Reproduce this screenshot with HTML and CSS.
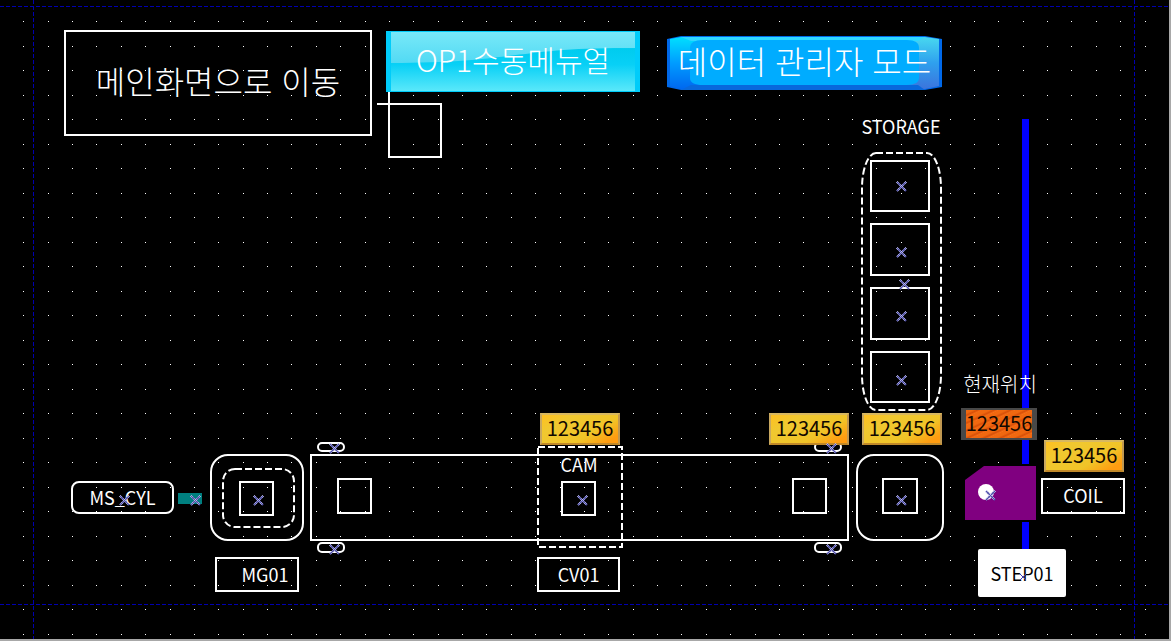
FILE: index.html
```html
<!DOCTYPE html>
<html lang="ko">
<head>
<meta charset="utf-8">
<title>OP1 수동메뉴얼</title>
<link rel="stylesheet" href="styles.css">
</head>
<body>
<main class="canvas">
  <svg class="drawing" aria-hidden="true">
    <defs>
      <pattern id="grid" x="23" y="21" width="195" height="49" patternUnits="userSpaceOnUse">
        <path class="dot" d="M0 0h1v1h-1zM25 0h1v1h-1zM49 0h1v1h-1zM73 0h1v1h-1zM98 0h1v1h-1zM122 0h1v1h-1zM147 0h1v1h-1zM171 0h1v1h-1zM0 25h1v1h-1zM25 25h1v1h-1zM49 25h1v1h-1zM73 25h1v1h-1zM98 25h1v1h-1zM122 25h1v1h-1zM147 25h1v1h-1zM171 25h1v1h-1z"/>
      </pattern>
      <g id="mark">
        <path class="mark-base" d="M-4 -4L5 5M5 -4L-4 5"/>
        <path class="mark-dots" d="M-4 -5L5 4M-5 -4L4 5M5 -5L-5 5M6 -4L-4 6"/>
      </g>
    </defs>
    <rect x="23" y="21" width="100%" height="100%" fill="url(#grid)"/>
    <g class="guide">
      <path d="M0 6.500H4000"/>
      <path d="M0 604.500H4000"/>
      <path d="M33.500 0V4000"/>
      <path d="M1134.500 0V4000"/>
    </g>
    <g class="rail">
      <rect x="1022" y="119" width="7" height="345"/>
      <rect x="1022" y="522" width="7" height="30"/>
    </g>
    <g class="line">
      <path d="M389 90V157H441V104H377"/>
      <rect x="871" y="161" width="58" height="50"/>
      <rect x="871" y="224" width="58" height="51"/>
      <rect x="871" y="288" width="58" height="51"/>
      <rect x="871" y="352" width="58" height="50"/>
      <rect x="311" y="455" width="537" height="85"/>
      <rect x="338" y="479" width="33" height="34"/>
      <rect x="793" y="479" width="33" height="34"/>
      <rect x="562" y="482" width="33" height="33"/>
      <rect x="240" y="482" width="33" height="33"/>
      <rect x="883" y="479" width="34" height="34"/>
    </g>
    <g class="line round">
      <rect x="211" y="455" width="92" height="85" rx="17"/>
      <rect x="857" y="455" width="86" height="85" rx="17"/>
      <rect x="318" y="443" width="26" height="8" rx="4"/>
      <rect x="318" y="543" width="26" height="9" rx="4"/>
      <rect x="815" y="443" width="26" height="8" rx="4"/>
      <rect x="815" y="543" width="26" height="9" rx="4"/>
    </g>
    <g class="line dashed">
      <rect x="862" y="153" width="79" height="257" rx="14" ry="35"/>
      <rect x="538" y="447" width="84" height="100"/>
      <rect x="223" y="469" width="71" height="58" rx="12"/>
    </g>
    <rect class="rod" x="178" y="493" width="24" height="11"/>
    <path class="head" d="M965 480L984 466H1036V520H965Z"/>
    <circle class="spot" cx="986" cy="492" r="8"/>
  </svg>

  <button class="node nav-main" type="button">메인화면으로 이동</button>
  <button class="node nav-manual" type="button">
    <svg class="gloss" viewBox="0 0 254 61" preserveAspectRatio="none" aria-hidden="true">
      <defs>
        <linearGradient id="aqua" x2="0" y2="1">
          <stop offset="0" stop-color="#35d8f4"/><stop offset=".3" stop-color="#00ccef"/>
          <stop offset=".55" stop-color="#08d0f6"/><stop offset="1" stop-color="#5ae8fa"/>
        </linearGradient>
        <linearGradient id="shine" x2="0" y2="1">
          <stop offset="0" stop-color="#78e8f8"/><stop offset="1" stop-color="#52daf4"/>
        </linearGradient>
      </defs>
      <rect width="254" height="61" fill="#00ccfa"/>
      <rect x="5" y="1" width="244" height="59" fill="url(#aqua)"/>
      <path d="M5 1H249V17C130 16 130 32 5 32Z" fill="url(#shine)"/>
    </svg>
    <span class="caption">OP1수동메뉴얼</span>
  </button>
  <button class="node nav-data" type="button">
    <svg class="gloss" viewBox="0 0 275 54" preserveAspectRatio="none" aria-hidden="true">
      <defs>
        <linearGradient id="edgeL" x2="0" y2="1">
          <stop offset="0" stop-color="#00e0ff"/><stop offset=".5" stop-color="#009cff"/><stop offset="1" stop-color="#0068f0"/>
        </linearGradient>
        <linearGradient id="edgeR" x2="0" y2="1">
          <stop offset="0" stop-color="#48d8f0"/><stop offset=".5" stop-color="#2fa0ee"/><stop offset="1" stop-color="#3c74dc"/>
        </linearGradient>
      </defs>
      <path d="M0 3L14 0H258L275 3V51L258 54H14L0 51Z" fill="#0068e8"/>
      <path d="M3 3L14 1H140V53H14L3 50Z" fill="url(#edgeL)"/>
      <path d="M135 1H258L272 3V50L258 53H135Z" fill="url(#edgeR)"/>
      <path d="M14 1H258L251 5H24Z" fill="#30d8ff"/>
      <path d="M24 49H251L258 54H14Z" fill="#0868dc"/>
      <path d="M36 4H240Q252 4 252 12V42Q252 49 240 49H36Q23 49 23 42V12Q23 4 36 4Z" fill="#00acff"/>
    </svg>
    <span class="caption">데이터 관리자 모드</span>
  </button>

  <div class="node text storage">STORAGE</div>
  <div class="node text cam">CAM</div>
  <div class="node text position" id="pos-label">현재위치</div>

  <output class="node value value-cam">123456</output>
  <output class="node value value-end">123456</output>
  <output class="node value value-storage">123456</output>
  <output class="node value value-coil">123456</output>
  <output class="node value value-position" aria-labelledby="pos-label">123456</output>

  <div class="node tag cylinder">MS_CYL</div>
  <div class="node tag magazine">MG01</div>
  <div class="node tag conveyor">CV01</div>
  <div class="node tag coil">COIL</div>
  <div class="node tag step">STEP01</div>

  <svg class="drawing marks" aria-hidden="true">
    <use href="#mark" x="901" y="186"/><use href="#mark" x="901" y="252"/>
    <use href="#mark" x="904" y="284"/><use href="#mark" x="901" y="316"/>
    <use href="#mark" x="901" y="380"/><use href="#mark" x="901" y="500"/>
    <use href="#mark" x="582" y="500"/><use href="#mark" x="258" y="500"/>
    <use href="#mark" x="124" y="500"/><use href="#mark" x="195" y="500"/>
    <use href="#mark" x="334" y="448"/><use href="#mark" x="334" y="549"/>
    <use href="#mark" x="831" y="448"/><use href="#mark" x="831" y="549"/>
    <use href="#mark" x="990" y="495"/>
    <path class="mark-thin" d="M1020 574L1026 580M1026 574L1020 580"/>
  </svg>
</main>
</body>
</html>
```

FILE: styles.css
```css
* {
  box-sizing: border-box;
}

body {
  margin: 0;
  background: #000;
}

.canvas {
  position: relative;
  min-height: 100vh;
  overflow: hidden;
  border-right: 2px solid #a8a8a8;
  border-bottom: 2px solid #a8a8a8;
  background: #000;
  color: #fff;
  font-family: "Noto Sans CJK KR", sans-serif;
  font-size: 18px;
  line-height: 24px;
}

.drawing {
  position: absolute;
  inset: 0;
  width: 100%;
  height: 100%;
}

.marks {
  pointer-events: none;
}

.dot {
  fill: #fff;
}

.guide {
  fill: none;
  stroke: #0000b0;
  stroke-width: 1;
  stroke-dasharray: 4 2;
}

.rail {
  fill: #00f;
}

.line {
  fill: none;
  stroke: #fff;
  stroke-width: 2;
}

.dashed {
  stroke-dasharray: 7 3;
}

.rod {
  fill: #008080;
}

.head {
  fill: #800080;
}

.spot {
  fill: #fff;
}

.mark-base {
  fill: none;
  stroke: #5050a8;
  stroke-width: 2;
}

.mark-dots {
  fill: none;
  stroke: #d0d0f8;
  stroke-width: 1;
  stroke-dasharray: 1 1;
}

.mark-thin {
  stroke: #4040b0;
  stroke-width: 1;
}

.node {
  position: absolute;
  display: flex;
  align-items: center;
  justify-content: center;
  margin: 0;
  padding: 0;
  white-space: nowrap;
}

button.node {
  border: 0;
  background: none;
  color: #fff;
  font-family: inherit;
  font-size: 32px;
  font-weight: 300;
  line-height: 40px;
  padding-bottom: 6px;
  cursor: pointer;
}

button.nav-main {
  left: 64px;
  top: 30px;
  width: 308px;
  height: 106px;
  border: 2px solid #fff;
}

button.nav-manual {
  left: 386px;
  top: 31px;
  width: 254px;
  height: 61px;
  font-size: 30px;
}

button.nav-data {
  left: 667px;
  top: 36px;
  width: 275px;
  height: 54px;
}

.gloss {
  position: absolute;
  inset: 0;
  width: 100%;
  height: 100%;
}

.caption {
  position: relative;
}

.storage {
  left: 861px;
  top: 114px;
  width: 80px;
}

.cam {
  left: 539px;
  top: 452px;
  width: 80px;
}

.position {
  left: 960px;
  top: 372px;
  width: 80px;
  font-size: 20px;
  font-weight: 300;
}

.value {
  width: 80px;
  height: 32px;
  padding-bottom: 2px;
  border: 2px solid;
  border-color: #d8b860 #c09850 #c08828 #c8a860;
  background: linear-gradient(150deg, #ffc020 0%, #f0c830 25%, #f0c428 65%, #ff9c10 90%);
  color: #100800;
  font-size: 20px;
}

.value-cam {
  left: 540px;
  top: 413px;
}

.value-end {
  left: 769px;
  top: 413px;
}

.value-storage {
  left: 862px;
  top: 413px;
}

.value-coil {
  left: 1044px;
  top: 440px;
}

.value-position {
  left: 961px;
  top: 408px;
  width: 76px;
  border-width: 2px 5px;
  border-color: #484848;
  background: repeating-linear-gradient(155deg, #f06810 0 3px, #d85008 5px, #f87018 7px);
}

.tag {
  padding-bottom: 2px;
  border: 2px solid #fff;
}

.cylinder {
  left: 71px;
  top: 481px;
  width: 103px;
  height: 33px;
  border-radius: 8px;
}

.magazine {
  left: 215px;
  top: 557px;
  width: 84px;
  height: 35px;
  padding-left: 16px;
}

.conveyor {
  left: 537px;
  top: 557px;
  width: 83px;
  height: 35px;
}

.coil {
  left: 1041px;
  top: 478px;
  width: 84px;
  height: 36px;
}

.step {
  left: 978px;
  top: 549px;
  width: 88px;
  height: 48px;
  padding-bottom: 0;
  border-radius: 2px;
  background: #fff;
  color: #000;
}
```
